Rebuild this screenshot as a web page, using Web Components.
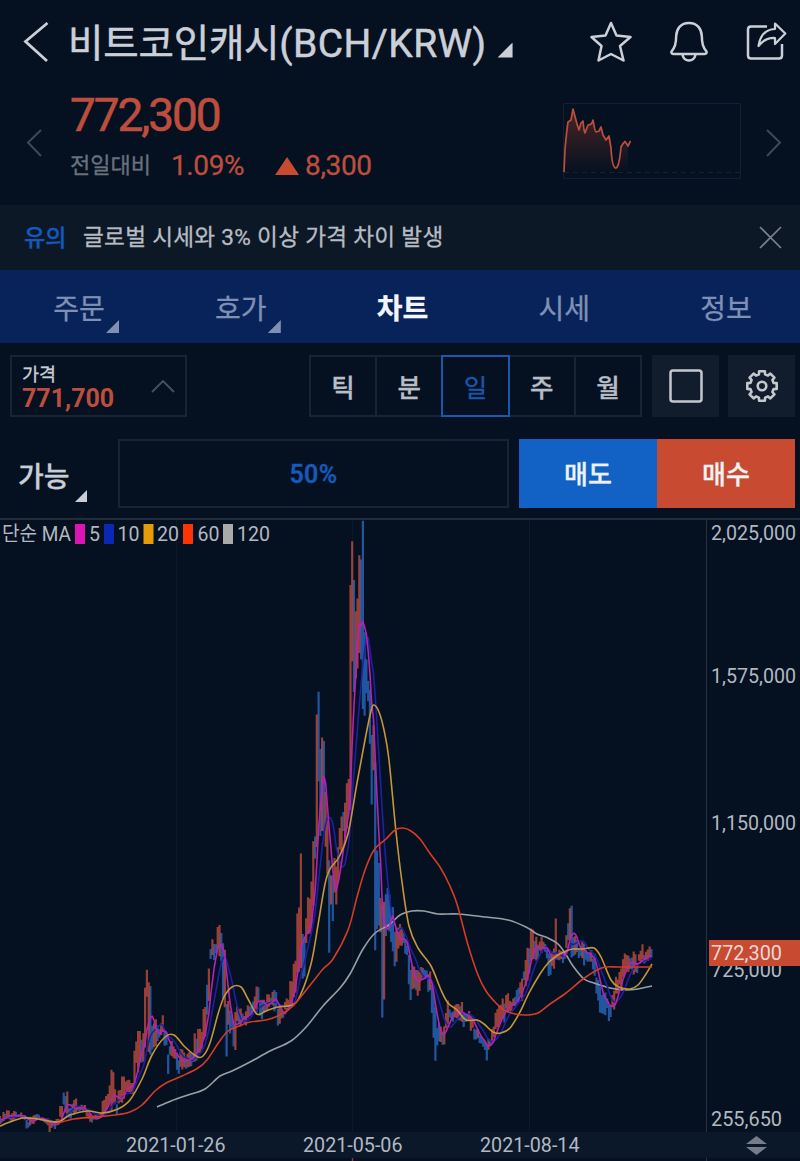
<!DOCTYPE html>
<html lang="ko">
<head>
<meta charset="utf-8">
<title>비트코인캐시(BCH/KRW)</title>
<style>
    html, body {
        margin: 0;
        background: #051120;
    }
    body {
        width: 800px;
        height: 1161px;
        overflow: hidden;
        font-family: Roboto, "Noto Sans CJK KR", sans-serif;
        color: #c9ced6;
        -webkit-text-stroke: 0.3px currentColor;
    }
</style>
</head>
<body>
<coin-app></coin-app>

<script>
class BaseElement extends HTMLElement {
    constructor() {
        super();
        this.attachShadow({ mode: 'open' });
    }

    connectedCallback() {
        this.shadowRoot.innerHTML = this.template();
    }
}

// Small triangle that marks an item with a dropdown
class CornerMark extends BaseElement {
    template() {
        return `
            <style>
                :host {
                    display: block;
                    width: var(--mark, 13px);
                    height: var(--mark, 13px);
                    background: currentColor;
                    clip-path: polygon(100% 0, 100% 100%, 0 100%);
                }
            </style>
        `;
    }
}
customElements.define('corner-mark', CornerMark);

class CoinHeader extends BaseElement {
    template() {
        return `
            <style>
                :host {
                    display: flex;
                    align-items: center;
                    height: 84px;
                    box-sizing: border-box;
                    padding: 0 13px 0 22px;
                    color: #cbd0d8;
                }
                svg { display: block; fill: none; stroke: currentColor; }
                .back { width: 28px; margin-right: 18px; }
                h1 {
                    margin: 4px 0 0;
                    font-size: 39px;
                    font-weight: 400;
                    line-height: 50px;
                    white-space: nowrap;
                    -webkit-text-stroke-width: 0.5px;
                }
                .ko { font-size: 38.5px; letter-spacing: -0.2px; }
                .en { letter-spacing: 0.4px; }
                corner-mark { --mark: 15px; margin: 16px 0 0 11px; }
                .icons {
                    display: flex;
                    gap: 38px;
                    margin-left: auto;
                }
            </style>
            <svg class="back" height="42" viewBox="0 0 28 42" stroke-width="2.8"><path d="M25.500 2 3.500 20.500 25 40"/></svg>
            <h1><span class="ko">비트코인캐시</span><span class="en">(BCH/KRW)</span></h1>
            <corner-mark></corner-mark>
            <div class="icons">
                <svg width="42" height="42" viewBox="0 0 42 42" stroke-width="2.500" stroke-linejoin="round"><path d="M21 2 26.500 14.500 40.500 16 30 25 33.500 39.500 21 33 8.500 39.500 11.500 25 1.500 16 15.500 14.500Z"/></svg>
                <svg width="38" height="42" viewBox="0 0 38 42" stroke-width="2.500" stroke-linejoin="round"><path d="M19 2C10.500 2 6.500 8 6.200 15C6 23 5 26 1.500 30.500Q1 33 4 33H34Q37 33 36.500 30.500C33 26 32 23 31.800 15C31.500 8 27.500 2 19 2ZM12.500 34Q14 39.500 19 39.500T25.500 34"/></svg>
                <svg width="41" height="42" viewBox="1 0 41 42" stroke-width="2.500" stroke-linejoin="round"><path d="M22 5.500H6Q3 5.500 3 8.500V34.500Q3 37.500 6 37.500H34Q37 37.500 37 34.500V23"/><path stroke-width="2.200" d="M13.500 25Q16 8.500 30 8V2.500L40.300 12.500 30 23V17Q20 16.500 13.500 25Z"/></svg>
            </div>
        `;
    }
}
customElements.define('coin-header', CoinHeader);

class CoinPrice extends BaseElement {
    template() {
        return `
            <style>
                :host {
                    display: flex;
                    height: 121px;
                    box-sizing: border-box;
                    padding: 0 17px 0 26px;
                    color: #bd4e3d;
                }
                svg { display: block; fill: none; }
                .arrow { margin-top: 44px; stroke: #3d4858; stroke-width: 2; }
                .prices { margin-left: 26px; }
                .now { font-size: 46px; line-height: 54px; letter-spacing: -2.1px; margin-top: 4px; -webkit-text-stroke-width: 0.6px; }
                .change { display: flex; align-items: center; font-size: 28px; line-height: 34px; margin-top: 7px; letter-spacing: -0.4px; }
                .label { font-size: 22px; color: #68717e; letter-spacing: 0; width: 101px; }
                .up {
                    width: 24px;
                    height: 18px;
                    background: #c84a31;
                    clip-path: polygon(50% 0, 100% 100%, 0 100%);
                    margin: 0 6px 0 31px;
                }
                .spark { margin: 19px 24px 0 auto; }
            </style>
            <svg class="arrow" width="18" height="30" viewBox="0 0 18 30"><path d="M15 2 2 14.500 15 28"/></svg>
            <div class="prices">
                <div class="now">772,300</div>
                <div class="change">
                    <span class="label">전일대비</span><span>1.09%</span><i class="up"></i><span>8,300</span>
                </div>
            </div>
            <svg class="spark" width="178" height="76" viewBox="0 0 178 76">
                <defs>
                    <linearGradient id="fade" x2="0" y2="1">
                        <stop stop-color="#c84a31" stop-opacity=".35"/>
                        <stop offset="1" stop-color="#c84a31" stop-opacity="0"/>
                    </linearGradient>
                </defs>
                <path d="M.5.500H177.500V75.500H.500Z" stroke="#122031"/>
                <path d="M1 69.500H177" stroke="#142233" stroke-dasharray="5 4"/>
                <path d="M1 69 2 46 5 19 8 17 10 6 14 21 16 27 18 20 20 20 22 30 25 22 28 21 31 18 33 28 36 28 38 24 40 32 43 36 46 33 48 45 50 61 53 65 55 61 58 44 61 40 63 43 65 42V69Z" fill="url(#fade)"/>
                <path d="M1 69 2 46Q4 25 5 19L8 17 10 6 14 21 16 27 18 20 20 18Q21 29 22 30L25 22Q29 22 30 17 32 29 33 29L36 28 38 24 40 32 43 37 46 33 48 45Q49 64 52.500 65T58 44Q60 40 62 38.500L65 43 67.500 38" stroke="#bd4e3d" stroke-width="1.700" stroke-linejoin="round"/>
            </svg>
            <svg class="arrow" width="18" height="30" viewBox="0 0 18 30"><path d="M2 2 15 14.500 2 28"/></svg>
        `;
    }
}
customElements.define('coin-price', CoinPrice);

class NoticeBar extends BaseElement {
    template() {
        return `
            <style>
                :host {
                    display: flex;
                    align-items: center;
                    height: 65px;
                    box-sizing: border-box;
                    padding: 0 18px 0 24px;
                    background: #0d1827;
                    font-size: 22.6px;
                    letter-spacing: 0.3px;
                    color: #b7bcc3;
                }
                b { width: 59px; font-size: 23px; font-weight: 500; letter-spacing: 0; color: #1459bb; }
                b, span { position: relative; top: -2px; }
                svg { margin-left: auto; fill: none; stroke: #7b828c; stroke-width: 1.6; }
            </style>
            <b>유의</b>
            <span><slot></slot></span>
            <svg width="23" height="23" viewBox="0 0 23 23"><path d="M1 1 22 22M22 1 1 22"/></svg>
        `;
    }
}
customElements.define('notice-bar', NoticeBar);

class TabItem extends BaseElement {
    template() {
        return `
            <style>
                :host {
                    position: relative;
                    display: flex;
                    align-items: center;
                    justify-content: center;
                    flex: 1;
                    color: #8090b5;
                }
                :host([active]) { color: #f2f5fa; font-weight: 700; }
                corner-mark { position: absolute; left: 108px; bottom: 10px; }
            </style>
            <span><slot></slot></span>
            ${this.hasAttribute('more') ? '<corner-mark></corner-mark>' : ''}
        `;
    }
}
customElements.define('tab-item', TabItem);

class CoinTabs extends BaseElement {
    template() {
        return `
            <style>
                :host {
                    display: flex;
                    height: 73px;
                    box-sizing: border-box;
                    margin: 0 -7px 0 -2px;
                    background: #08235a;
                    font-size: 28px;
                }
            </style>
            <slot></slot>
        `;
    }
}
customElements.define('coin-tabs', CoinTabs);

class ChartToolbar extends BaseElement {
    template() {
        const units = ['틱', '분', '일', '주', '월'];
        return `
            <style>
                :host {
                    display: flex;
                    height: 62px;
                    margin: 12px 5px 0 10px;
                }
                svg { display: block; fill: none; stroke: #c3c8cf; }
                .price {
                    display: flex;
                    justify-content: space-between;
                    align-items: center;
                    width: 177px;
                    box-sizing: border-box;
                    padding: 0 10px 0 10px;
                    border: 2px solid #182433;
                }
                .price small { display: block; font-size: 18.5px; line-height: 20px; margin-top: 4px; }
                .price b { display: block; font-size: 25px; line-height: 27px; color: #bd4e3d; font-weight: 700; -webkit-text-stroke-width: 0; }
                .units {
                    display: flex;
                    width: 333px;
                    margin-left: 122px;
                }
                .units span {
                    display: flex;
                    align-items: center;
                    justify-content: center;
                    flex: 1;
                    padding-bottom: 2px;
                    border: 2px solid #182433;
                    margin-right: -2px;
                    font-size: 25.5px;
                    font-weight: 500;
                    color: #b9bec6;
                }
                .units span:last-child { margin-right: 0; }
                .units .on { border-color: #1c56ad; color: #1c56ad; z-index: 1; font-weight: 400; }
                .tool {
                    display: flex;
                    align-items: center;
                    justify-content: center;
                    width: 67px;
                    background: #111c2c;
                    margin-left: auto;
                }
                .tool + .tool { margin-left: 9px; }
            </style>
            <div class="price">
                <div><small>가격</small><b>771,700</b></div>
                <svg width="24" height="14" viewBox="0 0 24 14" style="stroke:#465162;stroke-width:1.800"><path d="M1 13 12 2 23 13"/></svg>
            </div>
            <div class="units">
                ${units.map(u => `<span class="${u === '일' ? 'on' : ''}">${u}</span>`).join('')}
            </div>
            <div class="tool">
                <svg width="34" height="34" viewBox="0 0 34 34" stroke-width="2.500"><rect x="1.500" y="1.500" width="31" height="31" rx="2.500"/></svg>
            </div>
            <div class="tool">
                <svg width="34" height="34" viewBox="0 0 34 34" stroke-width="2.600" stroke-linejoin="round"><path d="${gearPath()}"/><circle cx="17" cy="17" r="4.300"/></svg>
            </div>
        `;
    }
}

// Outline with eight teeth around the centre of a 34px box
function gearPath() {
    const points = [];
    for (let i = 0; i < 8; i++) {
        const a = i * 45;
        [[-15, 12], [-11, 15], [11, 15], [15, 12]].forEach(([da, r]) => {
            const t = (a + da) * Math.PI / 180;
            points.push((17 + r * Math.cos(t)).toFixed(1) + ' ' + (17 + r * Math.sin(t)).toFixed(1));
        });
    }
    return 'M' + points.join('L') + 'Z';
}
customElements.define('chart-toolbar', ChartToolbar);

class OrderBar extends BaseElement {
    template() {
        return `
            <style>
                :host {
                    display: flex;
                    height: 69px;
                    margin: 22px 5px 0 18px;
                    font-weight: 500;
                }
                div { display: flex; align-items: center; justify-content: center; box-sizing: border-box; }
                .kind { position: relative; justify-content: flex-start; width: 100px; padding-top: 2px; font-size: 28px; color: #c9ced6; }
                corner-mark { --mark: 12px; position: absolute; left: 57px; bottom: 6px; }
                .ratio { width: 391px; padding-top: 2px; border: 2px solid #182433; color: #1459bb; font-size: 25px; font-weight: 600; letter-spacing: 0.4px; }
                .sell, .buy { width: 138px; padding-bottom: 3px; font-size: 26px; color: #eef2f8; }
                .sell { background: #1261c4; margin-left: auto; }
                .buy { background: #c84a31; }
            </style>
            <div class="kind">가능<corner-mark></corner-mark></div>
            <div class="ratio">50%</div>
            <div class="sell">매도</div>
            <div class="buy">매수</div>
        `;
    }
}
customElements.define('order-bar', OrderBar);

// [x, high, low] along the daily price range, in page pixels
const RANGE = [
    [0,1117,1123],[5,1113,1121],[8,1110,1118],[12,1114,1121],[15,1111,1119],[20,1113,1118],[24,1113,1121],[28,1120,1128],[32,1116,1124],
    [36,1113,1121],[42,1118,1122],[47,1119,1124],[50,1121,1131],[55,1121,1128],[58,1119,1127],[60,1107,1117],[64,1083,1112],[66,1089,1114],
    [70,1107,1118],[75,1099,1113],[79,1106,1112],[83,1105,1112],[88,1113,1118],[91,1115,1124],[95,1115,1121],[99,1114,1119],[103,1101,1113],
    [107,1097,1109],[110,1079,1106],[112,1075,1108],[115,1091,1105],[117,1103,1114],[120,1090,1105],[123,1076,1102],[127,1081,1091],[132,1084,1094],
    [134,1054,1080],[137,1034,1072],[141,1035,1060],[143,1034,1058],[145,988,1048],[147,971,1007],[149.500,983,1055],[152,1024,1050],[156,1018,1043],
    [160,1026,1040],[163,1013,1036],[166,1028,1045],[168,1050,1073],[171,1042,1054],[174,1048,1058],[178,1054,1076],[182,1051,1068],[187,1054,1068],
    [191,1050,1064],[195,1035,1063],[200,1032,1052],[205,1006,1036],[208,970,1015],[210,940,968],[213,940,960],[216,938,958],[219,929,952],
    [222,927,958],[224,945,1003],[226,1004,1058],[228,1002,1033],[231,1010,1030],[234,1018,1048],[238,1003,1028],[241,1010,1024],[245,1013,1026],
    [250,1004,1015],[255,998,1010],[258,980,1008],[261,997,1018],[265,999,1012],[269,996,1008],[273,990,1008],[275,982,1010],[278,1007,1029],
    [282,1009,1018],[287,1000,1012],[291,982,1003],[294,957,992],[298,912,972],[301,853,968],[303,928,972],[306,910,948],[309,893,936],
    [312,885,928],[314,838,904],[316,820,866],[317.500,704,845],[319,691,778],[321,753,840],[323,736,830],[325,790,845],[327,818,870],
    [329,860,954],[331,870,900],[333,873,918],[335,862,905],[338,850,882],[341,822,858],[344,798,840],[347,784,824],[349,768,815],
    [350.500,584,810],[352.300,541,660],[354,580,692],[356,612,678],[358,598,668],[360,552,652],[361.500,560,660],[363,520,710],
    [364.500,632,716],[366.500,648,690],[368.500,668,712],[370,690,744],[371.500,735,805],[374,728,772],[376,765,965],[378,860,925],
    [380,900,932],[382,905,1018],[384,902,1000],[386,882,928],[389,888,932],[392,907,944],[395,925,963],[398,926,950],[402,927,947],
    [406,940,958],[409,950,998],[412,965,996],[415,967,988],[418,972,1000],[421,965,980],[425,968,980],[429,973,993],[432,985,1015],
    [434,995,1040],[436,1008,1062],[438,1020,1048],[441,1025,1040],[443,1028,1045],[446,1010,1030],[449,1003,1023],[452,1009,1020],
    [456,1005,1018],[460,1004,1020],[464,1010,1026],[468,1010,1020],[472,1018,1030],[476,1028,1040],[480,1036,1045],[484,1040,1050],
    [486,1044,1062],[489,1038,1048],[493,1028,1040],[496,1012,1032],[500,1006,1028],[504,998,1020],[507,993,1012],[511,1002,1013],
    [515,996,1008],[518,985,1000],[521,980,1000],[525,964,985],[528,948,976],[530,940,970],[532,930,956],[535,935,958],[538,942,966],
    [541,938,955],[544,942,950],[547,946,960],[550,953,975],[553,951,972],[556,911,960],[558,951,962],[562,952,962],[564,950,960],
    [566,931,952],[568,916,942],[570,899,942],[572,906,958],[574,936,954],[577,938,950],[580,947,957],[582.500,935,964],[586,950,962],
    [590,950,960],[594,953,973],[596,966,1002],[599,977,1010],[602,990,1010],[606,993,1013],[610,1005,1020],[613,993,1010],[617,977,996],
    [621,968,988],[624,953,978],[627,955,970],[631,955,968],[634,953,975],[637,963,975],[640,950,964],[642,946,962],[646,953,965],
    [649,948,962],[651,946,957],[652.500,950,957]
];

const MA20 = [[0,1126],[10,1122],[23,1118],[38,1119],[58,1122],[70,1115],[88,1111],[102,1113],[118,1109],[130,1100],[142,1079],[152,1055],[165,1037],[174,1035],[184,1046],[196,1056],[203,1056],[210,1043],[218,1014],[224,997],[232,987],[241,987],[248,999],[257,1014],[266,1011],[278,1007],[292,1005],[300,996],[311,964],[318,925],[325,884],[330,869],[339,857],[348,834],[357,783],[365,740],[371,711],[374,705],[379,712],[384,730],[389,760],[396,832],[402,882],[409,926],[418,948],[431,966],[441,990],[448,1003],[457,1010],[466,1020],[477,1020],[484,1024],[493,1032],[501,1033],[510,1028],[520,1012],[529,993],[540,974],[549,962],[558,955],[566,951],[573,949],[583,949],[594,948],[601,957],[611,980],[619,987],[630,989],[638,985],[646,974],[652,964]];
const MA60 = [[58,1123],[74,1119],[95,1117],[115,1115],[130,1112],[142,1105],[155,1091],[166,1083],[182,1076],[198,1068],[207,1060],[219,1042],[228,1031],[239,1026],[250,1022],[266,1020],[280,1015],[293,1006],[311,984],[323,969],[333,959],[348,930],[357,897],[365,870],[374,850],[386,839],[395,830],[403,828],[411,831],[420,839],[429,852],[440,867],[449,884],[457,904],[468,945],[478,975],[486,991],[495,1002],[504,1010],[515,1014],[527,1015],[538,1013],[550,1004],[566,993],[583,979],[597,970],[606,967],[618,967],[637,967],[652,967]];
const MA120 = [[157,1107],[171,1101],[188,1095],[205,1089],[220,1076],[232,1071],[250,1062],[270,1051],[291,1041],[307,1026],[323,1006],[340,988],[350,974],[363,949],[375,933],[389,925],[400,915],[412,911],[424,911],[438,914],[458,914],[485,917],[508,920],[526,927],[537,934],[548,938],[558,944],[565,953],[573,966],[584,979],[594,983],[610,988],[624,990],[638,989],[652,986]];

const STEP = 1.77;

function rangeAt(x) {
    let i = 1;
    while (i < RANGE.length - 1 && RANGE[i][0] < x) i++;
    const [a, b] = [RANGE[i - 1], RANGE[i]];
    const near = x - a[0] < b[0] - x ? a : b;
    const t = Math.min(1, (x - a[0]) / (b[0] - a[0]));
    // Pull towards the closest point so that single spikes keep their full length
    const mix = k => (a[k] + (b[k] - a[k]) * t) * 0.2 + near[k] * 0.8;
    return [mix(1), mix(2)];
}

function smoothPath(pts) {
    let d = `M${pts[0]}`;
    for (let i = 0; i < pts.length - 1; i++) {
        const p0 = pts[i - 1] || pts[i], p1 = pts[i], p2 = pts[i + 1], p3 = pts[i + 2] || p2;
        const c = (a, b, p, s) => [p[0] + s * (b[0] - a[0]) / 6, p[1] + s * (b[1] - a[1]) / 6].map(v => v.toFixed(1));
        d += `C${c(p0, p2, p1, 1)} ${c(p1, p3, p2, -1)} ${p2}`;
    }
    return d;
}

class PriceChart extends BaseElement {
    buildSeries() {
        const bars = [];
        let prev = 1120;
        for (let i = 0; i * STEP <= 653; i++) {
            const x = i * STEP;
            let [hi, lo] = rangeAt(x);
            const mid = (hi + lo) / 2;
            const size = lo - hi;
            // Repeatable wobble between neighbouring days
            const w = Math.sin(i * 12.9898) * 43758.5453;
            const n = w - Math.floor(w);
            if (size < 50) {
                hi += (n - 0.35) * size * 0.5;
                lo += (0.35 - ((n * 7) % 1)) * size * 0.5;
            }
            const up = mid < prev - 1 ? n < 0.85 : mid > prev + 1 ? n < 0.25 : n < 0.5;
            bars.push({ x, hi, lo, mid, up });
            prev = mid;
        }
        return bars;
    }

    average(bars, count) {
        return bars.map((bar, i) => {
            const part = bars.slice(Math.max(0, i - count + 1), i + 1);
            return [bar.x.toFixed(1), (part.reduce((s, p) => s + p.mid, 0) / part.length).toFixed(1)];
        });
    }

    template() {
        const bars = this.buildSeries();
        const wick = up => bars.filter(b => b.up === up).map(b => `M${b.x.toFixed(1)} ${b.hi.toFixed(1)}V${b.lo.toFixed(1)}`).join('');
        const prices = [['2,025,000', 533], ['1,575,000', 676], ['1,150,000', 823], ['725,000', 970], ['255,650', 1119]];
        const dates = [['2021-01-26', 126], ['2021-05-06', 303], ['2021-08-14', 480]];
        const legend = [['#dc14b4', 75, '5', 89], ['#0a28b4', 104, '10', 117.5], ['#e69b0a', 143.5, '20', 157], ['#ff3405', 183, '60', 197.5], ['#aaaaaa', 223, '120', 237]];

        return `
            <style>
                :host {
                    display: block;
                    height: 643px;
                    margin-top: 10px;
                }
                svg { display: block; }
                text { font-size: 20px; fill: #b2b8c0; -webkit-text-stroke-width: 0; }
                .line { fill: none; stroke-width: 1.6; stroke-linejoin: round; }
            </style>
            <svg width="800" height="643" viewBox="0 518 800 643">
                <clipPath id="plot"><rect y="520" width="706" height="612"/></clipPath>
                <rect y="1132" width="800" height="26" fill="#0b182a"/>
                <path d="M176.500 520V1132M352.500 520V1132M529.500 520V1132" stroke="#0c1928"/>
                <path d="M706.500 520V1132" stroke="#273240"/>
                <path d="M0 519H800" stroke="#222d3b" stroke-width="2"/>
                <g clip-path="url(#plot)">
                    <path d="${wick(false)}" stroke="#2763b6" stroke-width="2.200" opacity=".85"/>
                    <path d="${wick(true)}" stroke="#c9503f" stroke-width="2.200" opacity=".75"/>
                    <path class="line" d="${smoothPath(MA120)}" stroke="#9a9fa4"/>
                    <path class="line" d="M${this.average(bars, 10).join('L')}" stroke="#1b22a5"/>
                    <path class="line" d="M${this.average(bars, 5).join('L')}" stroke="#b522b5" stroke-width="1.500"/>
                    <path class="line" d="${smoothPath(MA20)}" stroke="#c69638"/>
                    <path class="line" d="${smoothPath(MA60)}" stroke="#d33c25"/>
                </g>
                <text x="2" y="541" textLength="69" lengthAdjust="spacingAndGlyphs">단순 MA</text>
                ${legend.map(([color, x, label, tx]) => `
                    <rect x="${x}" y="524" width="10" height="20" fill="${color}"/>
                    <text x="${tx}" y="541" textLength="${label.length * 11}" lengthAdjust="spacingAndGlyphs">${label}</text>
                `).join('')}
                ${prices.map(([label, y]) => `
                    <text x="711" y="${y + 7}" textLength="${label.length > 7 ? 85 : 71}" lengthAdjust="spacingAndGlyphs">${label}</text>
                `).join('')}
                <rect x="709" y="940" width="91" height="26" fill="#c84a31"/>
                <text x="711" y="960" textLength="71" lengthAdjust="spacingAndGlyphs" style="fill:#e6d9d8">772,300</text>
                ${dates.map(([label, x]) => `
                    <text x="${x}" y="1152" textLength="99.500" lengthAdjust="spacingAndGlyphs">${label}</text>
                `).join('')}
                <path d="M746 1144 756.500 1136 767 1144ZM746 1147H767L756.500 1155Z" fill="#747d89"/>
                <path d="M352.500 1158V1161" stroke="#8b3c35" stroke-width="1.500"/>
                <path d="M706.500 1158V1161" stroke="#273240"/>
            </svg>
        `;
    }
}
customElements.define('price-chart', PriceChart);

class CoinApp extends BaseElement {
    template() {
        return `
            <style>
                :host {
                    display: block;
                    width: 800px;
                    height: 1161px;
                    overflow: hidden;
                }
            </style>
            <coin-header></coin-header>
            <coin-price></coin-price>
            <notice-bar>글로벌 시세와 3% 이상 가격 차이 발생</notice-bar>
            <coin-tabs>
                <tab-item more>주문</tab-item>
                <tab-item more>호가</tab-item>
                <tab-item active>차트</tab-item>
                <tab-item>시세</tab-item>
                <tab-item>정보</tab-item>
            </coin-tabs>
            <chart-toolbar></chart-toolbar>
            <order-bar></order-bar>
            <price-chart></price-chart>
        `;
    }
}
customElements.define('coin-app', CoinApp);
</script>
</body>
</html>
